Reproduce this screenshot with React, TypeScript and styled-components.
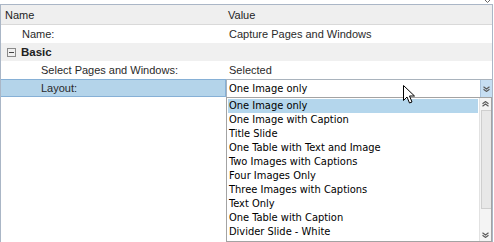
import React from "react";
import styled, { createGlobalStyle } from "styled-components";

const Global = createGlobalStyle`
  html, body { margin: 0; padding: 0; background: #fff; }
  body { font-family: "Liberation Sans", Arial, sans-serif; }
`;

const Page = styled.div`
  position: relative;
  width: 494px;
  height: 242px;
  overflow: hidden;
  background: #fff;
`;

const TopStrip = styled.div`
  height: 4px;
  display: flex;
  justify-content: flex-end;
  padding-right: 4px;
`;

const Frame = styled.div`
  width: 491px;
  height: 237px;
  border: 1px solid #aab6c6;
  border-bottom: none;
  display: flex;
  flex-direction: column;
`;

const HeaderRow = styled.div`
  display: grid;
  grid-template-columns: 225px 1fr;
  height: 19px;
  background: #efefef;
  border-bottom: 1px solid #d9d9d9;
  align-items: center;
  font-size: 11px;
  color: #1e1e1e;
`;

const HeaderCell = styled.div<{ pad: number }>`
  padding-left: ${p => p.pad}px;
`;

const Row = styled.div<{ group?: boolean }>`
  display: grid;
  grid-template-columns: 225px 1fr;
  height: 18px;
  align-items: center;
  font-size: 11px;
  color: #2a2a2a;
  background: ${p => (p.group ? "#f0f0f0" : "#fff")};
`;

const NameCell = styled.div<{ indent: number; selected?: boolean }>`
  height: 100%;
  box-sizing: border-box;
  display: flex;
  align-items: center;
  padding-left: ${p => p.indent}px;
  background: ${p => (p.selected ? "#b4d4ea" : "transparent")};
  border: ${p => (p.selected ? "1px solid #86b0d6" : "none")};
  border-left: none;
`;

const ValueCell = styled.div`
  padding-left: 3px;
`;

const GroupLabel = styled.div`
  display: flex;
  align-items: center;
  gap: 5px;
  padding-left: 6px;
  font-size: 11.5px;
  font-weight: bold;
  color: #222;
`;

const Toggle = styled.span`
  width: 9px;
  height: 9px;
  box-sizing: border-box;
  border: 1px solid #8a8a8a;
  position: relative;
  &::after {
    content: "";
    position: absolute;
    left: 1px;
    right: 1px;
    top: 3px;
    height: 1px;
    background: #444;
  }
`;

const ComboBox = styled.div`
  height: 100%;
  box-sizing: border-box;
  border-top: 1px solid #a9b3bd;
  border-left: 1px solid #a9b3bd;
  display: flex;
  align-items: center;
  background: #fff;
`;

const ComboText = styled.div`
  flex: 1;
  padding-left: 2px;
  font-family: "DejaVu Sans Condensed", "DejaVu Sans", sans-serif;
  font-size: 11px;
  color: #000;
`;

const ArrowButton = styled.div`
  width: 11px;
  height: 100%;
  background: #c6def2;
  border-left: 1px solid #a9c3dc;
  display: flex;
  align-items: center;
  justify-content: center;
`;

const Body = styled.div`
  flex: 1;
`;

const DropList = styled.div`
  position: absolute;
  left: 226px;
  top: 97px;
  width: 266px;
  height: 145px;
  box-sizing: border-box;
  border: 1px solid #a3a3a3;
  background: #fff;
  display: flex;
`;

const Items = styled.div`
  flex: 1;
  padding: 1px 0 0 1px;
`;

const Item = styled.div<{ active?: boolean }>`
  height: 14px;
  line-height: 14px;
  padding-left: 1px;
  margin-right: 1px;
  font-family: "DejaVu Sans Condensed", "DejaVu Sans", sans-serif;
  font-size: 11px;
  color: #000;
  white-space: nowrap;
  background: ${p => (p.active ? "#b4d6ec" : "transparent")};
`;

const ScrollBar = styled.div`
  width: 11px;
  display: flex;
  flex-direction: column;
  background: #f4f4f4;
  border-left: 1px solid #e2e2e2;
`;

const ScrollBtn = styled.div`
  height: 12px;
  display: flex;
  align-items: center;
  justify-content: center;
`;

const Track = styled.div`
  flex: 1;
  display: flex;
  flex-direction: column;
`;

const Thumb = styled.div`
  height: 97px;
  margin: 0 0 0 1px;
  background: #e8e8e8;
  border: 1px solid #cfcfcf;
  border-right: none;
`;

const Cursor = styled.svg`
  position: absolute;
  left: 403px;
  top: 85px;
`;

const Chevrons = ({ up }: { up?: boolean }) => (
  <svg width="7" height="6" viewBox="0 0 7 6">
    <g fill="none" stroke="#5a5a5a" strokeWidth="1.2" transform={up ? "rotate(180 3.5 3)" : undefined}>
      <path d="M0.5 0.8 L3.5 3 L6.5 0.8" />
      <path d="M0.5 3.2 L3.5 5.4 L6.5 3.2" />
    </g>
  </svg>
);

const options = [
  "One Image only",
  "One Image with Caption",
  "Title Slide",
  "One Table with Text and Image",
  "Two Images with Captions",
  "Four Images Only",
  "Three Images with Captions",
  "Text Only",
  "One Table with Caption",
  "Divider Slide - White",
];

export default function App() {
  return (
    <Page>
      <Global />
      <TopStrip>
        <svg width="5" height="3" viewBox="0 0 5 3">
          <path d="M0 0 L2.5 2.5 L5 0" fill="none" stroke="#666" strokeWidth="1" />
        </svg>
      </TopStrip>
      <Frame>
        <HeaderRow>
          <HeaderCell pad={4}>Name</HeaderCell>
          <HeaderCell pad={2}>Value</HeaderCell>
        </HeaderRow>
        <Row>
          <NameCell indent={21}>Name:</NameCell>
          <ValueCell>Capture Pages and Windows</ValueCell>
        </Row>
        <Row group>
          <GroupLabel>
            <Toggle />
            Basic
          </GroupLabel>
          <div />
        </Row>
        <Row>
          <NameCell indent={40}>Select Pages and Windows:</NameCell>
          <ValueCell>Selected</ValueCell>
        </Row>
        <Row>
          <NameCell indent={40} selected>
            Layout:
          </NameCell>
          <ComboBox>
            <ComboText>One Image only</ComboText>
            <ArrowButton>
              <Chevrons />
            </ArrowButton>
          </ComboBox>
        </Row>
        <Body />
      </Frame>
      <DropList>
        <Items>
          {options.map((o, i) => (
            <Item key={o} active={i === 0}>
              {o}
            </Item>
          ))}
        </Items>
        <ScrollBar>
          <ScrollBtn>
            <Chevrons up />
          </ScrollBtn>
          <Track>
            <Thumb />
          </Track>
          <ScrollBtn>
            <Chevrons />
          </ScrollBtn>
        </ScrollBar>
      </DropList>
      <Cursor width="13" height="20" viewBox="0 0 13 20">
        <path
          d="M0.5 0.5 L0.5 15.5 L4 12 L6.5 18 L9 17 L6.5 11 L11.5 11 Z"
          fill="#fff"
          stroke="#000"
          strokeWidth="1"
        />
      </Cursor>
    </Page>
  );
}
